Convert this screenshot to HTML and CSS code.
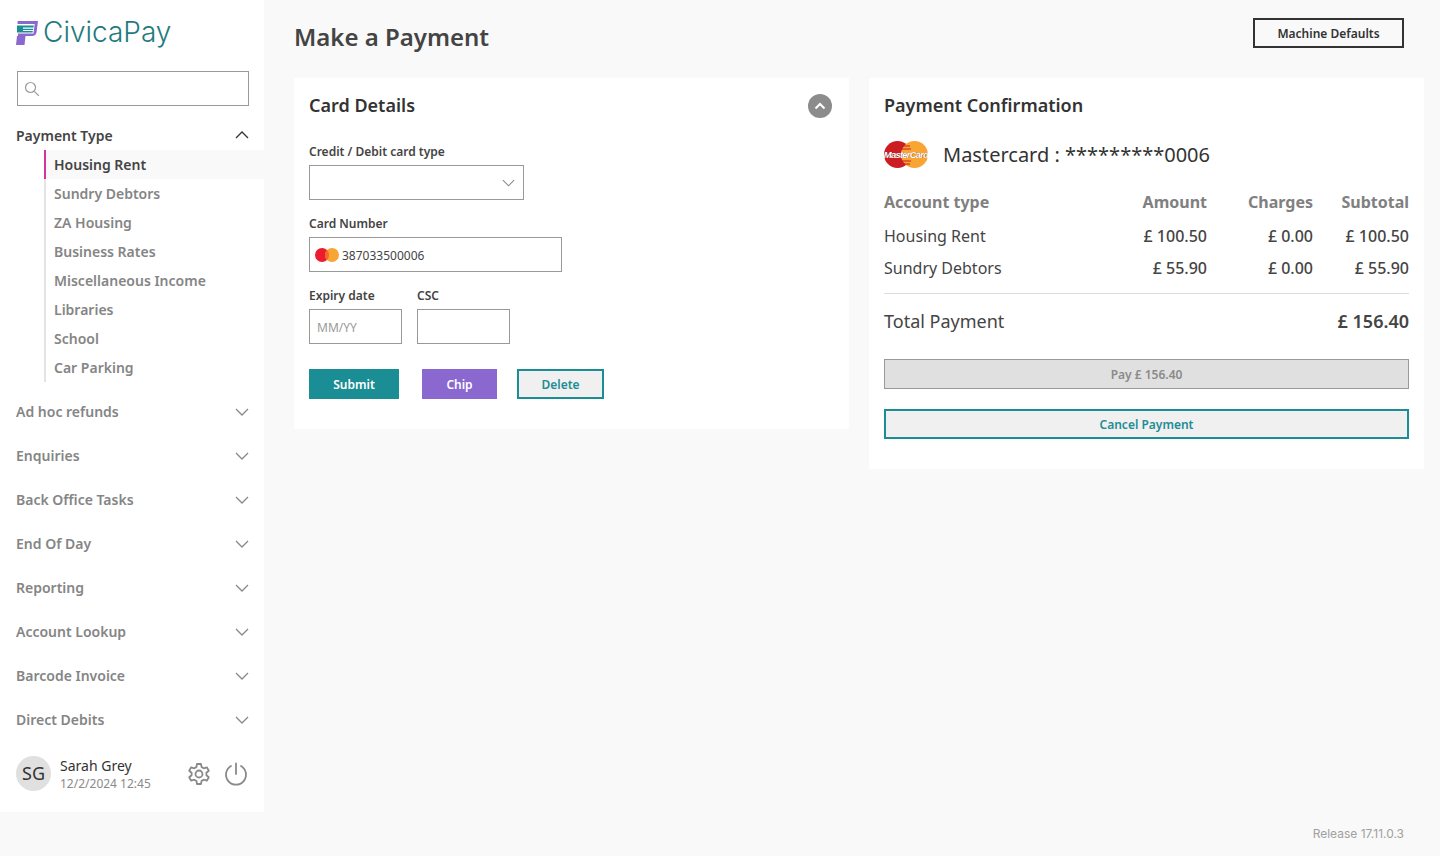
FILE: index.html
```html
<!DOCTYPE html>
<html lang="en">
<head>
<meta charset="utf-8">
<title>Make a Payment</title>
<link rel="stylesheet" href="styles.css">
</head>
<body>
<div class="app">
  <aside class="sidebar">
    <div class="logo">
      <svg class="logo-mark" viewBox="0 0 22 24" width="22" height="24">
        <path fill="#8a68d0" d="M1.500 0H22L20.600 11Q20 15 16 15H9.500L8.500 24H0L1 15H2Z"/>
        <path fill="#fff" d="M1 3H18.700L17.500 12.500H1Z"/>
        <path fill="#1b8d94" fill-rule="evenodd" d="M1 4.500H17.800L17.500 6.500H7V7.700H17.300L17 9H7V10H16.800L16.600 11.500H1Z"/>
      </svg>
      <span class="logo-text">CivicaPay</span>
    </div>
    <div class="search">
      <svg viewBox="0 0 16 16" width="16" height="16"><circle cx="6.500" cy="6.500" r="5" fill="none" stroke="#9a9a9a" stroke-width="1.200"/><path d="M10.300 10.300L14.800 14.800" stroke="#9a9a9a" stroke-width="1.200"/></svg>
    </div>
    <nav class="nav">
      <div class="nav-open">
        <span>Payment Type</span>
        <svg class="chev chev-up" viewBox="0 0 14 8"><path d="M1 7L7 1L13 7" fill="none" stroke="#333" stroke-width="1.300"/></svg>
      </div>
      <ul class="sub">
        <li class="active">Housing Rent</li>
        <li>Sundry Debtors</li>
        <li>ZA Housing</li>
        <li>Business Rates</li>
        <li>Miscellaneous Income</li>
        <li>Libraries</li>
        <li>School</li>
        <li>Car Parking</li>
      </ul>
      <div class="nav-item"><span>Ad hoc refunds</span><svg class="chev" viewBox="0 0 14 8"><path d="M1 1L7 7L13 1" fill="none" stroke="#888" stroke-width="1.300"/></svg></div>
      <div class="nav-item"><span>Enquiries</span><svg class="chev" viewBox="0 0 14 8"><path d="M1 1L7 7L13 1" fill="none" stroke="#888" stroke-width="1.300"/></svg></div>
      <div class="nav-item"><span>Back Office Tasks</span><svg class="chev" viewBox="0 0 14 8"><path d="M1 1L7 7L13 1" fill="none" stroke="#888" stroke-width="1.300"/></svg></div>
      <div class="nav-item"><span>End Of Day</span><svg class="chev" viewBox="0 0 14 8"><path d="M1 1L7 7L13 1" fill="none" stroke="#888" stroke-width="1.300"/></svg></div>
      <div class="nav-item"><span>Reporting</span><svg class="chev" viewBox="0 0 14 8"><path d="M1 1L7 7L13 1" fill="none" stroke="#888" stroke-width="1.300"/></svg></div>
      <div class="nav-item"><span>Account Lookup</span><svg class="chev" viewBox="0 0 14 8"><path d="M1 1L7 7L13 1" fill="none" stroke="#888" stroke-width="1.300"/></svg></div>
      <div class="nav-item"><span>Barcode Invoice</span><svg class="chev" viewBox="0 0 14 8"><path d="M1 1L7 7L13 1" fill="none" stroke="#888" stroke-width="1.300"/></svg></div>
      <div class="nav-item"><span>Direct Debits</span><svg class="chev" viewBox="0 0 14 8"><path d="M1 1L7 7L13 1" fill="none" stroke="#888" stroke-width="1.300"/></svg></div>
    </nav>
    <div class="user">
      <div class="avatar">SG</div>
      <div class="user-info">
        <div class="user-name">Sarah Grey</div>
        <div class="user-date">12/2/2024 12:45</div>
      </div>
      <svg class="gear" viewBox="0 0 24 24" width="24" height="24" fill="none" stroke="#8a8a8a" stroke-width="1.800" stroke-linejoin="round">
        <circle cx="12" cy="12" r="3.500"/>
        <path d="M10 2H14L14.600 5.100L16.800 6.300L19.800 5.300L21.800 8.700L19.400 10.800V13.200L21.800 15.300L19.800 18.700L16.800 17.700L14.600 18.900L14 22H10L9.400 18.900L7.200 17.700L4.200 18.700L2.200 15.300L4.600 13.200V10.800L2.200 8.700L4.200 5.300L7.200 6.300L9.400 5.100Z"/>
      </svg>
      <svg class="power" viewBox="0 0 24 24" width="24" height="24" fill="none" stroke="#8a8a8a" stroke-width="1.800" stroke-linecap="round">
        <path d="M12 1.500V12"/>
        <path d="M7 4A10 10 0 1 0 17 4"/>
      </svg>
    </div>
  </aside>

  <main class="main">
    <header class="page-head">
      <h1>Make a Payment</h1>
      <button class="btn-defaults">Machine Defaults</button>
    </header>
    <div class="cards">
      <section class="card card-left">
        <div class="card-head">
          <h2>Card Details</h2>
          <span class="collapse"><svg viewBox="0 0 12 8" width="12" height="8"><path d="M1.500 6.500L6 2L10.500 6.500" fill="none" stroke="#fff" stroke-width="2"/></svg></span>
        </div>
        <label class="lbl lbl-first">Credit / Debit card type</label>
        <div class="input select">
          <svg viewBox="0 0 14 8" width="13" height="8"><path d="M1 1L7 7L13 1" fill="none" stroke="#888" stroke-width="1.200"/></svg>
        </div>
        <label class="lbl">Card Number</label>
        <div class="input number">
          <svg viewBox="0 0 24 14" width="24" height="14"><circle cx="7" cy="7" r="7" fill="#eb1c2d"/><circle cx="17" cy="7" r="7" fill="#f9a533"/><path d="M12 2a7 7 0 0 1 0 10a7 7 0 0 1 0-10Z" fill="#f5672a"/></svg>
          <span>387033500006</span>
        </div>
        <div class="pair">
          <div>
            <label class="lbl">Expiry date</label>
            <div class="input short placeholder">MM/YY</div>
          </div>
          <div>
            <label class="lbl">CSC</label>
            <div class="input short"></div>
          </div>
        </div>
        <div class="actions">
          <button class="btn submit">Submit</button>
          <button class="btn chip">Chip</button>
          <button class="btn delete">Delete</button>
        </div>
      </section>

      <section class="card card-right">
        <h2>Payment Confirmation</h2>
        <div class="card-id">
          <svg viewBox="0 0 44 27" width="44" height="27">
            <circle cx="13.500" cy="13.500" r="13.500" fill="#cc1d22"/>
            <circle cx="30.500" cy="13.500" r="13.500" fill="#f9a533"/>
            <path d="M18 5H26M17 8H27M17 20H27M18 23H26" stroke="#cc1d22" stroke-width="1.200"/>
            <text class="mc-text mc-shadow" x="22.300" y="17.300" text-anchor="middle">MasterCard</text>
            <text class="mc-text" x="22" y="17" text-anchor="middle">MasterCard</text>
          </svg>
          <span>Mastercard : *********0006</span>
        </div>
        <div class="row row-head"><span class="c-type">Account type</span><span class="c-amt">Amount</span><span class="c-chg">Charges</span><span class="c-sub">Subtotal</span></div>
        <div class="row"><span class="c-type">Housing Rent</span><span class="c-amt num">£ 100.50</span><span class="c-chg num">£ 0.00</span><span class="c-sub num">£ 100.50</span></div>
        <div class="row"><span class="c-type">Sundry Debtors</span><span class="c-amt num">£ 55.90</span><span class="c-chg num">£ 0.00</span><span class="c-sub num">£ 55.90</span></div>
        <div class="total"><span>Total Payment</span><strong>£ 156.40</strong></div>
        <button class="wide pay">Pay £ 156.40</button>
        <button class="wide cancel">Cancel Payment</button>
      </section>
    </div>
    <div class="release">Release 17.11.0.3</div>
  </main>
</div>
</body>
</html>
```
FILE: styles.css
```css
* { box-sizing: border-box; }
html, body { margin: 0; height: 100%; }
body {
  background: #f9f9f9;
  font-family: "Noto Sans", sans-serif;
  color: #333;
  overflow: hidden;
}
.app { display: flex; height: 856px; align-items: flex-start; }
.sidebar {
  width: 264px;
  height: 812px;
  background: #fff;
  flex: none;
  display: flex;
  flex-direction: column;
}
.logo { display: flex; align-items: center; height: 25px; margin: 20px 0 0 16px; gap: 5px; }
.logo-mark { flex: none; }
.logo-text { font-family: "Inter", sans-serif; font-size: 28px; font-weight: 300; color: #1f7a80; line-height: 25px; }
.search {
  margin: 26px 15px 0 17px;
  height: 35px;
  border: 1px solid #999;
  display: flex;
  align-items: center;
  padding-left: 6px;
}
.nav { margin-top: 15px; }
.nav-open, .nav-item {
  display: flex;
  justify-content: space-between;
  align-items: center;
  padding: 0 15px 0 16px;
  font-size: 14px;
  font-weight: 600;
}
.nav-open { height: 29px; color: #444; }
.nav-item { height: 44px; color: #858585; }
.chev { width: 14px; height: 8px; flex: none; margin-top: 1px; }
.chev-up { margin-top: -1px; }
.sub { list-style: none; margin: 0 0 0 44px; padding: 0 0 7px; }
.sub li {
  height: 29px;
  line-height: 29px;
  padding-left: 8px;
  font-size: 14px;
  font-weight: 600;
  color: #858585;
  border-left: 2px solid #e4e4e4;
}
.sub li.active { color: #444; background: #f9f9f9; border-left-color: #d6339c; }
.user { display: flex; align-items: center; margin-top: 15px; padding-left: 16px; height: 35px; }
.avatar {
  width: 35px; height: 35px; border-radius: 50%;
  background: #e0e0e0; color: #333;
  font-size: 18px; line-height: 35px; text-align: center;
  flex: none;
}
.user-info { margin-left: 9px; width: 127px; flex: none; }
.user-name { font-size: 14px; line-height: 20px; color: #333; }
.user-date { font-size: 12px; line-height: 16px; color: #8a8a8a; }
.gear { flex: none; margin-right: 13px; }
.power { flex: none; }

.main { flex: 1; min-width: 0; padding: 0 16px 0 30px; position: relative; height: 856px; }
.page-head { display: flex; justify-content: space-between; align-items: flex-start; height: 78px; }
h1 { margin: 19px 0 0; font-size: 24px; font-weight: 600; line-height: 36px; color: #444; }
.btn-defaults {
  margin: 18px 20px 0 0;
  width: 151px; height: 30px;
  border: 2px solid #333; background: #f9f9f9;
  font: 600 12px "Noto Sans", sans-serif; color: #333;
}
.cards { display: flex; gap: 20px; align-items: flex-start; }
.card { background: #fff; width: 555px; padding: 0 15px; }
.card-left { height: 351px; }
.card-right { height: 391px; }
.card-head { display: flex; justify-content: space-between; align-items: flex-start; height: 56px; padding-right: 2px; }
.collapse {
  width: 24px; height: 24px; border-radius: 50%; background: #8c8c8c;
  display: flex; align-items: center; justify-content: center;
  margin-top: 16px;
}
h2 { margin: 0; font-size: 18px; font-weight: 600; color: #333; line-height: 54px; height: 56px; }
.lbl { display: block; font-size: 12px; font-weight: 600; line-height: 16px; color: #444; margin: 16px 0 5px; }
.lbl-first { margin-top: 10px; }
.input { border: 1px solid #999; height: 35px; background: #fff; }
.select { width: 215px; display: flex; align-items: center; justify-content: flex-end; padding-right: 8px; }
.number { width: 253px; display: flex; align-items: center; padding: 1px 0 0 5px; gap: 3px; font-size: 12px; color: #444; }
.pair { display: flex; gap: 15px; }
.short { width: 93px; }
.placeholder { font-size: 12px; line-height: 35px; padding-left: 7px; color: #999; }
.actions { display: flex; margin-top: 25px; }
.btn { height: 30px; border: 0; font: 600 12px "Noto Sans", sans-serif; color: #fff; padding: 0; }
.submit { width: 90px; background: #1b8d94; margin-right: 23px; }
.chip { width: 75px; background: #8a68d0; margin-right: 20px; }
.delete { width: 87px; background: #f0f0f0; border: 2px solid #1b8d94; color: #1b8d94; }
.card-id { display: flex; align-items: center; gap: 15px; height: 27px; margin-top: 7px; font-size: 20px; color: #333; }
.card-id svg { flex: none; }
.mc-text { font: italic 700 9.500px "Liberation Sans", sans-serif; letter-spacing: -0.800px; fill: #fff; }
.mc-shadow { fill: #5a1a10; }
.row { display: flex; height: 32px; align-items: center; font-size: 16px; color: #444; }
.row-head { margin-top: 16px; height: 36px; font-weight: 700; color: #808080; }
.c-type { flex: 1; }
.c-amt { width: 120px; text-align: right; }
.c-chg { width: 106px; text-align: right; }
.c-sub { width: 96px; text-align: right; }
.num { font-weight: 500; }
.total {
  display: flex; justify-content: space-between; align-items: center;
  border-top: 1px solid #ddd; margin-top: 9px; height: 55px;
  font-size: 18px; color: #444;
}
.total strong { font-weight: 600; }
.wide { display: block; width: 100%; height: 30px; font: 600 12px "Noto Sans", sans-serif; padding: 0; }
.pay { margin-top: 11px; background: #e0e0e0; border: 1px solid #999; color: #8a8a8a; }
.cancel { margin-top: 20px; background: #f0f0f0; border: 2px solid #1b8d94; color: #1b8d94; }
.release { position: absolute; right: 36px; top: 826px; font-family: "Inter", sans-serif; font-size: 12px; line-height: 16px; color: #a0a0a0; }
```
